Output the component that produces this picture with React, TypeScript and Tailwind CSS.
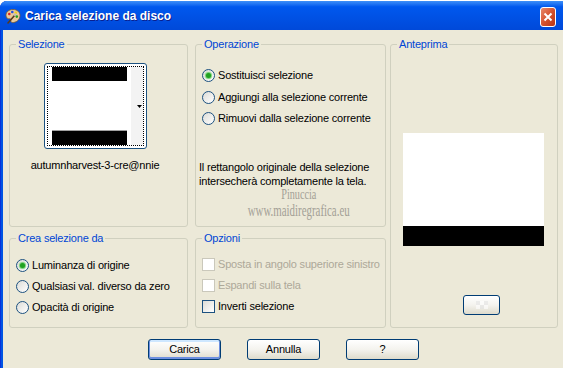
import type { ReactNode } from "react";

function Radio({ checked }: { checked?: boolean }) {
	return (
		<span className="flex h-[13px] w-[13px] shrink-0 items-center justify-center rounded-full border border-[#1c5180] bg-linear-to-br from-[#dcdcd7] to-white">
			{checked && <span className="h-[5px] w-[5px] rounded-full bg-[#21a121] shadow-[0_0_1px_1px_#6fd16f]" />}
		</span>
	);
}

function Check({ disabled }: { disabled?: boolean }) {
	return (
		<span
			className={
				disabled
					? "h-[13px] w-[13px] shrink-0 border border-[#cac8bb] bg-white"
					: "h-[13px] w-[13px] shrink-0 border border-[#1c5180] bg-linear-to-br from-[#dcdcd7] to-white"
			}
		/>
	);
}

function Group({ title, className, children }: { title: string; className: string; children: ReactNode }) {
	return (
		<fieldset className={"rounded-[3px] border border-[#d0d0bf] " + className}>
			<legend className="ml-[6px] px-[2px] leading-[13px] text-[#0046d5]">{title}</legend>
			{children}
		</fieldset>
	);
}

function XpButton({ label, main, className }: { label: ReactNode; main?: boolean; className: string }) {
	return (
		<button
			className={
				"flex items-center justify-center rounded-[3px] border border-[#003c74] bg-linear-to-b from-white via-[#f4f3ee] to-[#dedbcc] text-black " +
				(main ? "shadow-[inset_0_-1px_0_1px_#6d8fe0,inset_0_1px_0_1px_#cee7ff] " : "") +
				className
			}
		>
			{label}
		</button>
	);
}

function PaletteIcon() {
	return (
		<svg width="16" height="16" viewBox="0 0 16 16">
			<path d="M8 1.5C3.8 1.5 1 4 1 7.2c0 2.6 1.9 4 3.4 3.6 1.3-.4 1.6.6 1.4 1.7-.3 1.5 1 2.3 2.9 2 3.9-.6 6.3-3.5 6.3-6.9C15 4 12.1 1.5 8 1.5z" fill="#e9c99a" stroke="#7a5a30" strokeWidth="0.8" />
			<circle cx="4.3" cy="6" r="1.3" fill="#e02020" />
			<circle cx="7.3" cy="4" r="1.3" fill="#2050e0" />
			<circle cx="10.8" cy="4.8" r="1.3" fill="#f0d010" />
			<circle cx="11.8" cy="8.6" r="1.3" fill="#20a020" />
			<path d="M3 15 L9.5 7.5" stroke="#5a3a1a" strokeWidth="1.6" strokeLinecap="round" />
			<path d="M9.2 7.8 L11 5.6" stroke="#c0c0c0" strokeWidth="1.8" />
		</svg>
	);
}

export default function App() {
	return (
		<div className="h-[368px] w-[563px] overflow-hidden bg-white font-['Liberation_Sans',Arial,sans-serif] text-[11px] tracking-[-0.2px] text-black">
			<div className="mt-[1px] flex h-[367px] flex-col rounded-tl-[7px] bg-[#0054e3] shadow-[inset_1px_0_0_#0831d9]">
				{/* title bar */}
				<div className="flex h-[29px] shrink-0 items-center rounded-tl-[7px] bg-linear-to-b from-[#3d8ff8] via-[#0058ee] via-20% to-[#0049d9] pl-[5px] pr-[7px]">
					<PaletteIcon />
					<span className="ml-[4px] text-[12px] font-bold tracking-[0px] text-white [text-shadow:1px_1px_#0a1f8f]">
						Carica selezione da disco
					</span>
					<div className="ml-auto mt-[2px] flex h-[20px] w-[16px] items-center justify-center rounded-[3px] border border-white bg-linear-to-br from-[#e7886a] via-[#d6532e] to-[#b83312]">
						<svg width="10" height="10" viewBox="0 0 10 10">
							<path d="M1.5 1.5 L8.5 8.5 M8.5 1.5 L1.5 8.5" stroke="white" strokeWidth="2" />
						</svg>
					</div>
				</div>

				{/* client area */}
				<div className="ml-[3px] flex-1 bg-[#ece9d8]">
					<div className="flex pl-[6px] pt-[8px]">
						<div className="flex w-[179px] flex-col gap-[5px]">
							<Group title="Selezione" className="h-[189px]">
								<div className="flex w-[170px] flex-col items-center">
									<div className="mt-[12px] h-[86px] w-[103px] rounded-[3px] border border-[#1c5180] bg-white p-[2px]">
										<div className="flex h-full border border-dotted border-black">
											<div className="flex w-[83px] flex-col px-[4px]">
												<div className="h-[14px] bg-black" />
												<div className="flex-1 border-b border-[#a0a0a0] bg-white" />
												<div className="h-[14px] bg-black" />
											</div>
											<div className="flex flex-1 items-center justify-end bg-[#f3f3f3] pr-[1px]">
												<svg width="5" height="3" viewBox="0 0 5 3">
													<path d="M0 0 H5 L2.5 3z" fill="black" />
												</svg>
											</div>
										</div>
									</div>
									<div className="mt-[9px] leading-[14px]">autumnharvest-3-cre@nnie</div>
								</div>
							</Group>
							<Group title="Crea selezione da" className="h-[96px]">
								<div className="mt-[10px] flex flex-col pl-[6px]">
									<label className="flex h-[21px] items-center gap-[3px]"><Radio checked />Luminanza di origine</label>
									<label className="flex h-[21px] items-center gap-[3px]"><Radio />Qualsiasi val. diverso da zero</label>
									<label className="flex h-[21px] items-center gap-[3px]"><Radio />Opacità di origine</label>
								</div>
							</Group>
						</div>

						<div className="ml-[7px] flex w-[191px] flex-col gap-[5px]">
							<Group title="Operazione" className="h-[189px]">
								<div className="mt-[13px] flex flex-col pl-[6px]">
									<label className="flex h-[22px] items-center gap-[3px]"><Radio checked />Sostituisci selezione</label>
									<label className="flex h-[22px] items-center gap-[3px]"><Radio />Aggiungi alla selezione corrente</label>
									<label className="flex h-[21px] items-center gap-[3px]"><Radio />Rimuovi dalla selezione corrente</label>
								</div>
								<p className="mt-[31px] pl-[3px] leading-[14px]">
									Il rettangolo originale della selezione
									<br />
									intersecherà completamente la tela.
								</p>
								<div className="flex flex-col items-center pl-[16px] font-['Liberation_Serif',serif] tracking-[0px] text-[#a3a096]">
									<span className="scale-x-[0.68] text-[15px] leading-[13px]">Pinuccia</span>
									<span className="scale-x-[0.64] text-[17px] leading-[20px]">www.maidiregrafica.eu</span>
								</div>
							</Group>
							<Group title="Opzioni" className="h-[96px]">
								<div className="mt-[9px] flex flex-col pl-[6px]">
									<label className="flex h-[21px] items-center gap-[3px] text-[#aca899]"><Check disabled />Sposta in angolo superiore sinistro</label>
									<label className="flex h-[21px] items-center gap-[3px] text-[#aca899]"><Check disabled />Espandi sulla tela</label>
									<label className="flex h-[21px] items-center gap-[3px]"><Check />Inverti selezione</label>
								</div>
							</Group>
						</div>

						<div className="ml-[4px] w-[168px]">
							<Group title="Anteprima" className="h-[290px]">
								<div className="ml-[12px] mt-[82px] w-[141px]">
									<div className="h-[93px] bg-white" />
									<div className="h-[20px] bg-black" />
								</div>
								<XpButton
									className="ml-[72px] mt-[49px] h-[20px] w-[37px]"
									label={
										<span className="grid grid-cols-3 opacity-60">
											<span className="h-[4px] w-[4px] bg-[#e4e4e4]" />
											<span className="h-[4px] w-[4px] bg-white" />
											<span className="h-[4px] w-[4px] bg-[#e4e4e4]" />
											<span className="h-[4px] w-[4px] bg-white" />
											<span className="h-[4px] w-[4px] bg-[#e4e4e4]" />
											<span className="h-[4px] w-[4px] bg-white" />
										</span>
									}
								/>
							</Group>
						</div>
					</div>

					<div className="mt-[11px] flex justify-center gap-[26px] pl-[1px]">
						<XpButton main label="Carica" className="h-[21px] w-[73px]" />
						<XpButton label="Annulla" className="h-[21px] w-[73px]" />
						<XpButton label="?" className="h-[21px] w-[73px]" />
					</div>
				</div>
			</div>
		</div>
	);
}
